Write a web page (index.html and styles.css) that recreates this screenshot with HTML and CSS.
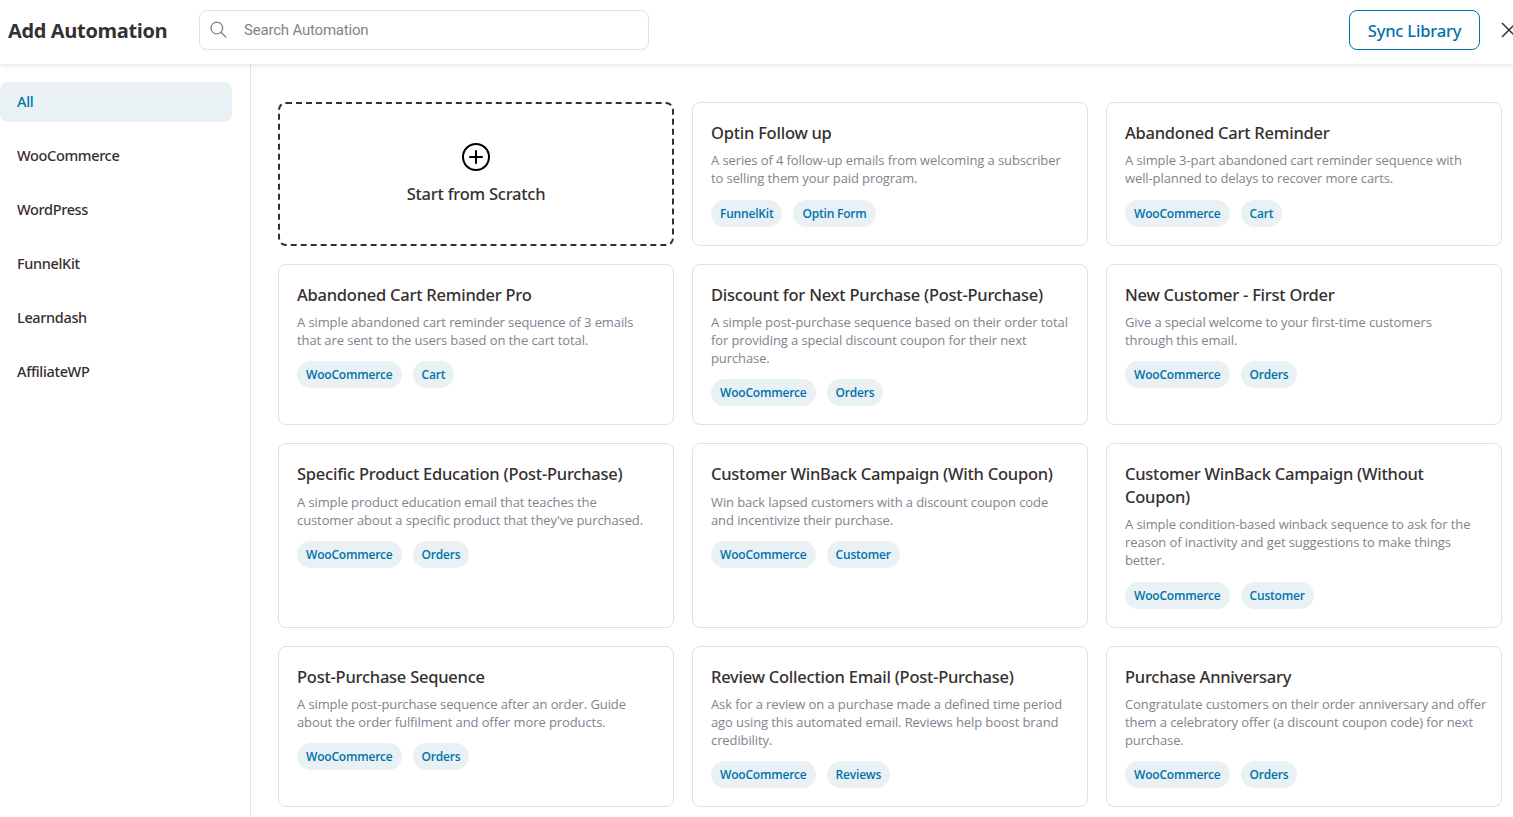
FILE: index.html
```html
<!DOCTYPE html>
<html lang="en">
  <head>
    <meta charset="UTF-8" />
    <title>Add Automation</title>
    <link rel="stylesheet" href="styles.css">
  </head>
  <body>
    <header class="header">
      <h1>Add Automation</h1>
      <label class="search">
        <svg width="18" height="18" viewBox="0 0 18 18" fill="none" stroke="#82838e" stroke-width="1.3" stroke-linecap="round">
          <circle cx="6.8" cy="7" r="5.8" />
          <path d="M11 11.2L15.8 16" />
        </svg>
        <input type="text" placeholder="Search Automation" />
      </label>
      <button class="sync">Sync Library</button>
      <button class="close" aria-label="Close">
        <svg width="16" height="16" viewBox="0 0 16 16" fill="none" stroke="#353030" stroke-width="1.5">
          <path d="M1 1L15 15M15 1L1 15" />
        </svg>
      </button>
    </header>

    <div class="content">
      <nav class="sidebar">
        <a class="active">All</a>
        <a>WooCommerce</a>
        <a>WordPress</a>
        <a>FunnelKit</a>
        <a>Learndash</a>
        <a>AffiliateWP</a>
      </nav>

      <main class="recipes">
        <div class="card scratch">
          <svg width="30" height="30" viewBox="0 0 30 30" fill="none" stroke="#000" stroke-width="2">
            <circle cx="15" cy="15" r="13" />
            <path d="M15 9V21M9 15H21" stroke-linecap="round" />
          </svg>
          <h2>Start from Scratch</h2>
        </div>
        <div class="card">
          <h2>Optin Follow up</h2>
          <p>A series of 4 follow-up emails from welcoming a subscriber<br>to selling them your paid program.</p>
          <div class="tags"><span>FunnelKit</span><span>Optin Form</span></div>
        </div>
        <div class="card">
          <h2>Abandoned Cart Reminder</h2>
          <p>A simple 3-part abandoned cart reminder sequence with<br>well-planned to delays to recover more carts.</p>
          <div class="tags"><span>WooCommerce</span><span>Cart</span></div>
        </div>

        <div class="card">
          <h2>Abandoned Cart Reminder Pro</h2>
          <p>A simple abandoned cart reminder sequence of 3 emails<br>that are sent to the users based on the cart total.</p>
          <div class="tags"><span>WooCommerce</span><span>Cart</span></div>
        </div>
        <div class="card">
          <h2>Discount for Next Purchase (Post-Purchase)</h2>
          <p>A simple post-purchase sequence based on their order total<br>for providing a special discount coupon for their next<br>purchase.</p>
          <div class="tags"><span>WooCommerce</span><span>Orders</span></div>
        </div>
        <div class="card">
          <h2>New Customer - First Order</h2>
          <p>Give a special welcome to your first-time customers<br>through this email.</p>
          <div class="tags"><span>WooCommerce</span><span>Orders</span></div>
        </div>

        <div class="card">
          <h2>Specific Product Education (Post-Purchase)</h2>
          <p>A simple product education email that teaches the<br>customer about a specific product that they've purchased.</p>
          <div class="tags"><span>WooCommerce</span><span>Orders</span></div>
        </div>
        <div class="card">
          <h2>Customer WinBack Campaign (With Coupon)</h2>
          <p>Win back lapsed customers with a discount coupon code<br>and incentivize their purchase.</p>
          <div class="tags"><span>WooCommerce</span><span>Customer</span></div>
        </div>
        <div class="card">
          <h2>Customer WinBack Campaign (Without<br>Coupon)</h2>
          <p>A simple condition-based winback sequence to ask for the<br>reason of inactivity and get suggestions to make things<br>better.</p>
          <div class="tags"><span>WooCommerce</span><span>Customer</span></div>
        </div>

        <div class="card">
          <h2>Post-Purchase Sequence</h2>
          <p>A simple post-purchase sequence after an order. Guide<br>about the order fulfilment and offer more products.</p>
          <div class="tags"><span>WooCommerce</span><span>Orders</span></div>
        </div>
        <div class="card">
          <h2>Review Collection Email (Post-Purchase)</h2>
          <p>Ask for a review on a purchase made a defined time period<br>ago using this automated email. Reviews help boost brand<br>credibility.</p>
          <div class="tags"><span>WooCommerce</span><span>Reviews</span></div>
        </div>
        <div class="card">
          <h2>Purchase Anniversary</h2>
          <p>Congratulate customers on their order anniversary and offer<br>them a celebratory offer (a discount coupon code) for next<br>purchase.</p>
          <div class="tags"><span>WooCommerce</span><span>Orders</span></div>
        </div>
      </main>
    </div>
  </body>
</html>
```
FILE: styles.css
```css
* {
  box-sizing: border-box;
}

body {
  margin: 0;
  height: 817px;
  overflow: hidden;
  display: flex;
  flex-direction: column;
  background-color: #fff;
  color: #353030;
  font-family: "Segoe UI", "Open Sans", "Noto Sans", sans-serif;
}

h1, h2, p {
  margin: 0;
}

button {
  font-family: inherit;
  background: none;
  cursor: pointer;
}

.header {
  display: flex;
  flex: none;
  height: 64px;
  padding: 10px 0 14px 8px;
  box-shadow: 0 1px 6px rgba(0, 0, 0, 0.12);
}

.header h1 {
  width: 191px;
  font-size: 20px;
  font-weight: 700;
  letter-spacing: -0.36px;
  line-height: 42px;
  white-space: nowrap;
}

.search {
  display: flex;
  align-items: center;
  gap: 16px;
  width: 450px;
  height: 40px;
  padding: 0 10px;
  border: 1px solid #dedfea;
  border-radius: 8px;
}

.search input {
  flex: 1;
  padding: 0;
  border: none;
  outline: none;
  font-family: Roboto, sans-serif;
  font-size: 15px;
  letter-spacing: -0.2px;
}

.search input::placeholder {
  color: #82838e;
}

.sync {
  width: 131px;
  height: 40px;
  margin-left: auto;
  padding: 0;
  border: 1px solid #0073aa;
  border-radius: 8px;
  color: #0073aa;
  font-family: "Noto Sans", sans-serif;
  font-size: 16.5px;
  font-weight: 500;
  letter-spacing: -0.2px;
}

.close {
  display: flex;
  align-items: center;
  flex: none;
  width: 33px;
  padding: 0 0 0 21px;
  border: none;
}

.close svg {
  flex: none;
}

.content {
  display: flex;
  flex: 1;
  min-height: 0;
}

.sidebar {
  display: flex;
  flex-direction: column;
  flex: none;
  gap: 14px;
  width: 251px;
  padding: 18px 18px 0 0;
  border-right: 1px solid #dedfea;
}

.sidebar a {
  height: 40px;
  padding-left: 17px;
  border-radius: 8px;
  font-family: "Noto Sans", sans-serif;
  font-size: 14.5px;
  font-weight: 500;
  letter-spacing: -0.35px;
  line-height: 38px;
}

.sidebar a.active {
  background-color: #e9f1f5;
  color: #0073aa;
}

.recipes {
  display: grid;
  grid-template-columns: repeat(3, 396px);
  align-content: start;
  gap: 18px;
  padding: 38px 0 0 27px;
}

.card {
  padding: 19.1px 18px 18px;
  border: 1px solid #dedfea;
  border-radius: 8px;
}

.card h2 {
  font-family: "Noto Sans", sans-serif;
  font-size: 16.5px;
  font-weight: 500;
  letter-spacing: -0.24px;
  line-height: 22.6px;
  white-space: nowrap;
}

.card p {
  margin: 6.6px 0 12.4px;
  color: #82838e;
  font-size: 13px;
  letter-spacing: -0.1px;
  line-height: 18px;
  white-space: nowrap;
}

.tags {
  display: flex;
  gap: 11px;
}

.tags span {
  height: 27px;
  padding: 0 9px;
  border-radius: 14px;
  background-color: #e9f1f5;
  color: #0073aa;
  font-size: 12px;
  font-weight: 600;
  letter-spacing: -0.2px;
  line-height: 27px;
}

.card.scratch {
  display: flex;
  flex-direction: column;
  align-items: center;
  justify-content: center;
  gap: 11px;
  padding-bottom: 20px;
  border: 2px dashed #353030;
}
```
